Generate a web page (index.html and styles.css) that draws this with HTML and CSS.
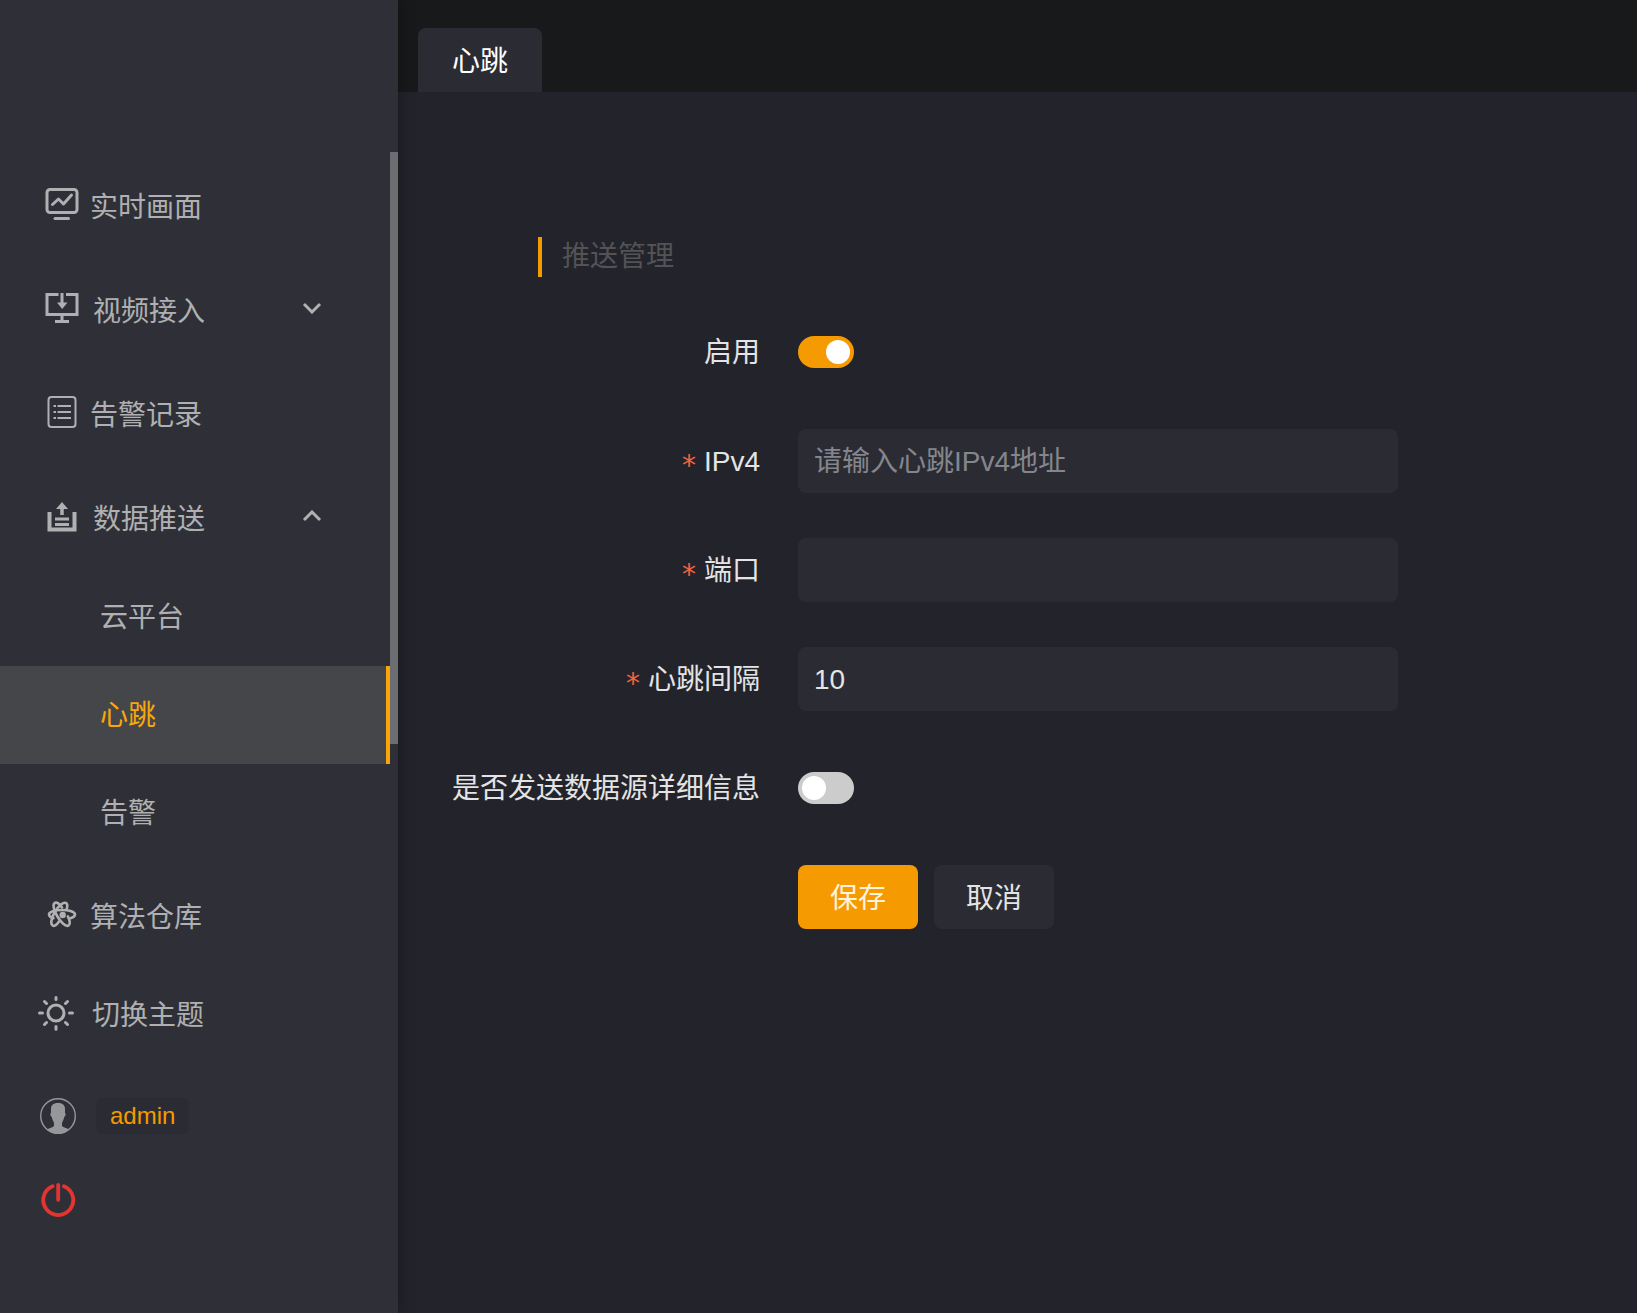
FILE: index.html
```
<!DOCTYPE html>
<html lang="zh-CN">
<head>
    <meta charset="UTF-8">
    <meta name="viewport" content="width=device-width, initial-scale=1.0">
    <title>心跳</title>
    <link rel="stylesheet" href="styles.css">
</head>
<body>
    <aside class="sidebar">
        <nav class="menu">
            <a class="menu-item" href="#">
                <svg class="icon" viewBox="0 0 36 36" fill="none" stroke="currentColor" stroke-width="3" stroke-linecap="round" stroke-linejoin="round">
                    <rect x="3" y="3.500" width="30" height="23" rx="3"/>
                    <path d="M8.500 18.500l6-5.500 5 5 8-9"/>
                    <path d="M11 32.500h13.500"/>
                </svg>
                <span>实时画面</span>
            </a>
            <button class="menu-item submenu-title" type="button">
                <svg class="icon" viewBox="0 0 36 36" fill="none" stroke="currentColor" stroke-width="3">
                    <path d="M14.500 4.500H3v20h30v-20H22"/>
                    <path d="M18 3v10M18 25v7M11 31.500h14"/>
                    <path d="M13 12.500h10.500L18.200 19z" fill="currentColor" stroke="none"/>
                </svg>
                <span>视频接入</span>
                <svg class="arrow" viewBox="0 0 18 12" fill="none" stroke="currentColor" stroke-width="3"><path d="M1 2l8 8 8-8"/></svg>
            </button>
            <a class="menu-item" href="#">
                <svg class="icon" viewBox="0 0 36 36" fill="none" stroke="currentColor" stroke-width="2">
                    <rect x="4.500" y="3" width="27" height="30" rx="3"/>
                    <path d="M13.500 12H27M13.500 18H27M13.500 24H27M9.500 12h2.500M9.500 18h2.500M9.500 24h2.500"/>
                </svg>
                <span>告警记录</span>
            </a>
            <button class="menu-item submenu-title" type="button">
                <svg class="icon" viewBox="0 0 36 36" fill="none" stroke="currentColor" stroke-width="4">
                    <path d="M5.500 14v17.500h25V14"/>
                    <path d="M18 9v8" stroke-width="3.500"/>
                    <path d="M11 21h14M11 26.500h14" stroke-width="3"/>
                    <path d="M12 11l6-7 6 7z" fill="currentColor" stroke="none"/>
                </svg>
                <span>数据推送</span>
                <svg class="arrow" viewBox="0 0 18 12" fill="none" stroke="currentColor" stroke-width="3"><path d="M1 10l8-8 8 8"/></svg>
            </button>
            <a class="submenu-item" href="#">云平台</a>
            <a class="submenu-item active" href="#">心跳</a>
            <a class="submenu-item" href="#">告警</a>
            <a class="menu-item" href="#">
                <svg class="icon" viewBox="0 0 36 36" fill="none" stroke="currentColor" stroke-width="2.600" stroke-linecap="round">
                    <path d="M9.500 22.200C6.500 21.300 5 20 5 18.500c0-2.500 5.500-4.500 13-4.500s13 2 13 4.500c0 1.500-1.500 2.800-4.500 3.700"/>
                    <path d="M18 11.500c-2.500-3.500-5.500-5.500-7.300-4.500-2.200 1.200-1 7 2.400 13 3.700 6.500 8.800 11 11.300 9.600 1.700-1 1.500-4.800-.5-9.200"/>
                    <path d="M15 25.500c-2.200 3.200-4.700 5-6.400 4-2.400-1.400-1.400-7.400 2.200-13.500C14.300 10 19.300 5.600 22 7c1.500.8 1.600 3.200.6 6.300"/>
                    <circle cx="18.700" cy="19" r="3.200" fill="currentColor" stroke="none"/>
                </svg>
                <span>算法仓库</span>
            </a>
        </nav>
        <div class="scroll-thumb"></div>
        <div class="tools">
            <button class="theme" type="button">
                <svg class="icon" viewBox="0 0 36 36" fill="none" stroke="currentColor" stroke-width="3" stroke-linecap="round">
                    <circle cx="18" cy="17" r="8"/>
                    <path d="M18 1.500v2M18 30.500v2.700M1.500 17h3M31.500 17h3M6.500 5.500l2 2M27.500 26.500l2 2M6.500 28.500l2-2M27.500 7.500l2-2"/>
                </svg>
                <span>切换主题</span>
            </button>
            <div class="user">
                <svg class="icon" viewBox="0 0 36 36">
                    <circle cx="18" cy="18" r="17.300" fill="none" stroke="#96979b" stroke-width="1.400"/>
                    <path d="M18 5c5 0 7.300 2.500 7 6.500v3.500c1 0 .8 3-.8 4-.5 3-1.700 4.500-2.200 6v3c1.500 1.800 4.500 2 7 3.500C26 34.500 22 36 18 36S10 34.500 7 31.500c2.500-1.500 5.500-1.700 7-3.500v-3c-.5-1.500-1.700-3-2.200-6-1.600-1-1.800-4-.8-4v-3.500C10.700 7.500 13 5 18 5z" fill="#96979b"/>
                </svg>
                <span class="user-name">admin</span>
            </div>
            <button class="logout" type="button" aria-label="退出">
                <svg class="icon" viewBox="0 0 36 36" fill="none" stroke="currentColor" stroke-width="3.800" stroke-linecap="round">
                    <path d="M12.500 4.200a15 15 0 1 0 11.500 0M18.200 2.800v15"/>
                </svg>
            </button>
        </div>
    </aside>

    <main class="main">
        <header class="tabs">
            <a class="tab" href="#">心跳</a>
        </header>
        <form class="form">
            <h2 class="form-title">推送管理</h2>
            <div class="form-row">
                <label for="enable">启用</label>
                <input class="switch" type="checkbox" id="enable" checked>
            </div>
            <div class="form-row">
                <label for="ip"><span class="required">*</span>IPv4</label>
                <input class="input-box" type="text" id="ip" placeholder="请输入心跳IPv4地址">
            </div>
            <div class="form-row">
                <label for="port"><span class="required">*</span>端口</label>
                <input class="input-box" type="text" id="port">
            </div>
            <div class="form-row">
                <label for="interval"><span class="required">*</span>心跳间隔</label>
                <input class="input-box" type="text" id="interval" value="10">
            </div>
            <div class="form-row">
                <label for="detail">是否发送数据源详细信息</label>
                <input class="switch" type="checkbox" id="detail">
            </div>
            <div class="form-row buttons">
                <button class="btn btn-primary" type="button">保存</button>
                <button class="btn" type="button">取消</button>
            </div>
        </form>
    </main>
</body>
</html>
```
FILE: styles.css
```
* {
    box-sizing: border-box;
}
body {
    margin: 0;
    min-height: 100vh;
    display: flex;
    background-color: #23242b;
    color: #e4e4e5;
    font-family: "Liberation Sans", "Noto Sans CJK SC", sans-serif;
    font-size: 28px;
    line-height: 40px;
}
a {
    color: inherit;
    text-decoration: none;
}
button, input {
    font: inherit;
    color: inherit;
    border: none;
    margin: 0;
}
button {
    background: none;
    padding: 0;
    cursor: pointer;
}

/* sidebar */
.sidebar {
    position: relative;
    flex: 0 0 398px;
    padding-top: 152px;
    background-color: #2f3037;
    color: #b0b0b2;
    box-shadow: 0 0 16px rgba(0, 0, 0, 0.35);
}
.menu {
    display: flex;
    flex-direction: column;
    margin-right: 8px;
}
.menu-item {
    display: flex;
    align-items: center;
    gap: 10px;
    height: 104px;
    padding: 0 68px 0 44px;
}
.menu-item span {
    padding-top: 8px;
}
.submenu-title {
    gap: 13px;
}
.icon {
    flex: none;
    width: 36px;
    height: 36px;
}
.arrow {
    width: 20px;
    height: 12px;
    margin-left: auto;
}
.submenu-item {
    height: 98px;
    padding-left: 100px;
    line-height: 100px;
}
.submenu-item.active {
    background-color: #45464a;
    border-right: 4px solid #f9a60a;
    color: #f9a60a;
}
.scroll-thumb {
    position: absolute;
    top: 152px;
    right: 0;
    width: 8px;
    height: 592px;
    background-color: #6c6d71;
}
.tools {
    display: flex;
    flex-direction: column;
    align-items: flex-start;
    padding-left: 38px;
}
.theme {
    display: flex;
    align-items: center;
    gap: 18px;
    height: 96px;
}
.theme span {
    padding-top: 4px;
}
.user {
    display: flex;
    align-items: center;
    gap: 20px;
    height: 108px;
    padding-left: 2px;
}
.user-name {
    padding: 0 14px;
    border-radius: 6px;
    background-color: #2b2c33;
    color: #f59a00;
    font-size: 24px;
    line-height: 36px;
}
.logout {
    display: flex;
    align-items: center;
    height: 60px;
    padding-left: 2px;
    color: #e43432;
}

/* content */
.main {
    flex: 1;
    min-width: 0;
}
.tabs {
    display: flex;
    align-items: flex-end;
    height: 92px;
    padding-left: 20px;
    background-color: #18191a;
}
.tab {
    height: 64px;
    padding: 0 34px;
    border-radius: 8px 8px 0 0;
    background-color: #2b2c33;
    color: #fff;
    line-height: 68px;
}
.form {
    display: flex;
    flex-direction: column;
    gap: 45px;
    padding: 145px 40px 40px;
}
.form-title {
    margin: 0 0 -2px 100px;
    padding-left: 20px;
    border-left: 4px solid #f59a00;
    color: #535355;
    font-size: 28px;
    font-weight: normal;
    line-height: 40px;
}
.form-row {
    display: flex;
    align-items: center;
    gap: 38px;
    height: 64px;
}
.form-row label {
    display: flex;
    flex: 0 0 322px;
    justify-content: flex-end;
    gap: 8px;
    padding-top: 2px;
}
.required {
    height: 40px;
    color: #f5633e;
    font-family: "DejaVu Sans", sans-serif;
    line-height: 48px;
}
.input-box {
    flex: 1;
    min-width: 0;
    max-width: 600px;
    height: 64px;
    padding: 2px 16px 0;
    border-radius: 8px;
    background-color: #2b2c33;
    outline: none;
}
.input-box::placeholder {
    color: #85868d;
}
.switch {
    appearance: none;
    display: flex;
    width: 56px;
    height: 32px;
    padding: 4px;
    border-radius: 16px;
    background-color: #ccc;
    cursor: pointer;
}
.switch::before {
    content: "";
    width: 24px;
    height: 24px;
    border-radius: 50%;
    background-color: #fff;
}
.switch:checked {
    justify-content: flex-end;
    background-color: #f59a00;
}
.buttons {
    gap: 16px;
    padding-left: 360px;
}
.btn {
    width: 120px;
    height: 64px;
    padding-top: 4px;
    border-radius: 8px;
    background-color: #2b2c33;
}
.btn-primary {
    background-color: #f59a00;
    color: #fff3df;
}
```
